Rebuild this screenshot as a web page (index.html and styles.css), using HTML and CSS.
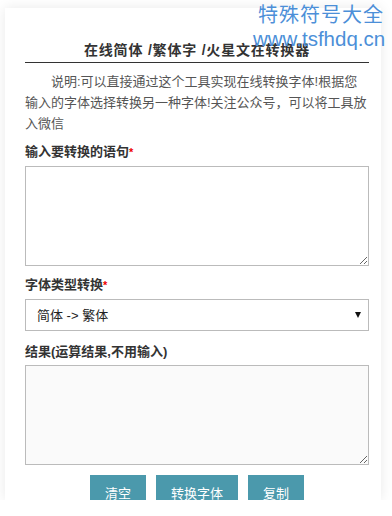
FILE: index.html
```html
<!DOCTYPE html>
<html>
<head>
	<meta charset="utf-8">
	<title>在线简体/繁体字/火星文在转换器</title>
	<link rel="stylesheet" href="styles.css">
</head>
<body>
	<div class="marca">
		<div class="marca-nombre">特殊符号大全</div>
		<div class="marca-web">www.tsfhdq.cn</div>
	</div>
	<div class="container">
		<h1>在线简体 /繁体字 /火星文在转换器</h1>
		<p class="intro">说明:可以直接通过这个工具实现在线转换字体!根据您输入的字体选择转换另一种字体!关注公众号，可以将工具放入微信</p>
		<form id="convertir-form">
			<label for="entrada" class="campo primero">输入要转换的语句<span class="req">*</span></label>
			<textarea id="entrada"></textarea>
			<label for="tipo" class="campo">字体类型转换<span class="req">*</span></label>
			<div class="select-wrap">
				<select id="tipo">
					<option>简体 -&gt; 繁体</option>
					<option>繁体 -&gt; 简体</option>
					<option>简体 -&gt; 火星文</option>
				</select>
			</div>
			<label for="salida" class="campo tercero">结果(运算结果,不用输入)</label>
			<textarea id="salida" class="resultado" readonly></textarea>
			<div class="botones">
				<button type="button">清空</button>
				<button type="button">转换字体</button>
				<button type="button">复制</button>
			</div>
		</form>
	</div>
</body>
</html>
```

FILE: styles.css
```css
body {
	margin: 0;
	font-family: "Liberation Sans", "Noto Sans CJK SC", sans-serif;
	background-color: #fff;
	color: #333;
}
.container {
	box-sizing: border-box;
	width: 376px;
	height: 492px;
	margin: 8px 0 0 5px;
	padding: 32px 12px 0 20px;
	background-color: #fff;
	box-shadow: 0 0 12px rgba(0,0,0,0.09);
}
h1 {
	margin: 0;
	padding-bottom: 2px;
	font-size: 14px;
	line-height: 20px;
	letter-spacing: 0.8px;
	text-align: center;
	color: #333;
	border-bottom: 1px solid #333;
}
.intro {
	margin: 8px 0 0;
	font-size: 13px;
	line-height: 21px;
	text-indent: 26px;
	color: #555;
}
.campo {
	display: block;
	margin: 8px 0 4px;
	font-size: 13px;
	line-height: 20px;
	font-weight: bold;
	color: #333;
}
.campo.tercero {
	margin: 11px 0 3px;
}
.req {
	color: #e00;
	font-size: 11px;
}
textarea {
	display: block;
	box-sizing: border-box;
	width: 344px;
	height: 100px;
	margin: 0;
	padding: 6px;
	border: 1px solid #bbb;
	border-radius: 0;
	background-color: #fff;
	font-family: inherit;
	font-size: 13px;
}
textarea + .campo {
	margin-top: 9px;
}
.resultado {
	background-color: #fafafa;
}
.select-wrap {
	position: relative;
	width: 344px;
}
.select-wrap::after {
	content: "";
	position: absolute;
	right: 8px;
	top: 13px;
	border-left: 3px solid transparent;
	border-right: 3px solid transparent;
	border-top: 6px solid #111;
}
select {
	display: block;
	box-sizing: border-box;
	width: 344px;
	height: 32px;
	margin: 0;
	padding: 0 0 0 11px;
	border: 1px solid #bbb;
	border-radius: 0;
	background-color: #fff;
	-webkit-appearance: none;
	appearance: none;
	font-family: inherit;
	font-size: 13px;
	color: #222;
}
.botones {
	display: flex;
	justify-content: center;
	gap: 10px;
	margin-top: 10px;
}
.botones button {
	height: 35px;
	padding: 0 15px;
	border: none;
	background-color: #4b99ac;
	color: #fff;
	font-family: inherit;
	font-size: 13px;
	cursor: pointer;
}

/* marca de agua arriba a la derecha */
.marca {
	position: absolute;
	top: 3px;
	left: 253px;
	color: #4c8fd8;
	z-index: 2;
}
.marca-nombre {
	padding-left: 5px;
	font-size: 20px;
	line-height: 24px;
	letter-spacing: 1px;
}
.marca-web {
	font-family: "Liberation Sans", sans-serif;
	font-size: 20.5px;
	line-height: 24px;
}
```
